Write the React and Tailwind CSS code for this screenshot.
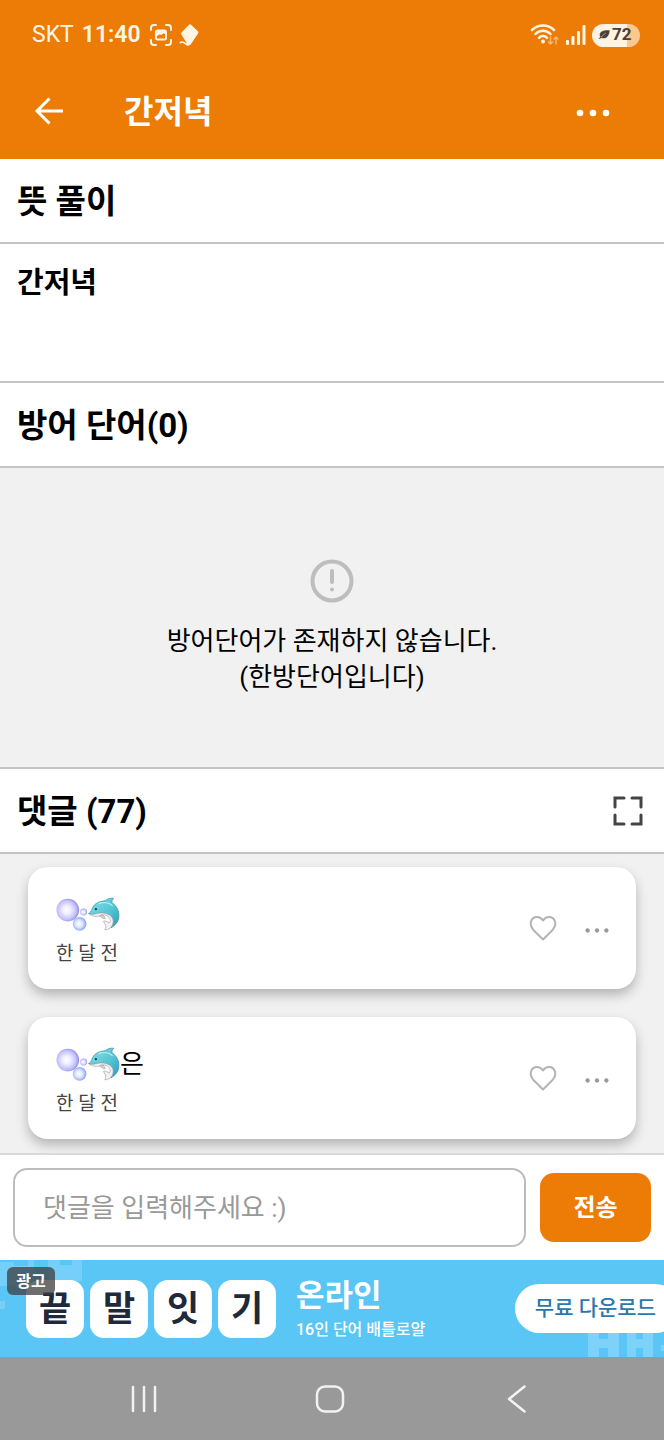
const Emojis = () => (
  <svg viewBox="0 0 65 36" className="h-9 w-16 shrink-0" role="img" aria-label="bubbles and dolphin">
    <defs>
      <radialGradient id="bubble" cx="0.45" cy="0.5" r="0.52">
        <stop offset="0" stopColor="#ffffff" />
        <stop offset="0.35" stopColor="#eeeeff" />
        <stop offset="0.8" stopColor="#c3c1fb" />
        <stop offset="1" stopColor="#9a94ea" />
      </radialGradient>
      <radialGradient id="bubbleBlue" cx="0.45" cy="0.5" r="0.52">
        <stop offset="0" stopColor="#ffffff" />
        <stop offset="0.5" stopColor="#dbe8ff" />
        <stop offset="1" stopColor="#8ea4ee" />
      </radialGradient>
      <linearGradient id="dolphin" x1="0" y1="0" x2="1" y2="1">
        <stop offset="0" stopColor="#8ae0e8" />
        <stop offset="0.55" stopColor="#55c6d4" />
        <stop offset="1" stopColor="#2b9db4" />
      </linearGradient>
    </defs>
    <circle cx="12" cy="14" r="11.5" fill="url(#bubble)" />
    <circle cx="28" cy="16" r="3.5" fill="url(#bubble)" />
    <circle cx="24" cy="28" r="7" fill="url(#bubbleBlue)" />
    <path
      d="M33 17.5c2-1 2.6-2 3.4-4C38 8 43 5 50 4.600c2-2 5-3 8.500-2.600-1.500 1.600-1.800 3-1.700 4.500C61.500 9.500 64.500 15 63.800 21c-.6 5-3.400 8.500-8 11 1-3 1.400-5 .9-7.500C55.500 18.500 49 16 42 17.600c-3 .7-6.500 1.300-9-.1z"
      fill="url(#dolphin)"
      stroke="#2b8fa5"
      strokeWidth="0.7"
    />
    <path
      d="M34 18.200c4 .5 6-.2 9-.9 7-1.600 14 1.500 15 7 .3 3-.6 5.500-3 8-1.500 1-3 1.600-5.500 1.700 1-1.700 1.300-3.300.8-5-.8-1.200-2-2.500-1.800-4 2 .2 4 .8 5.500 2.200 1.700-1.500 1.500-4-.3-6-1.500-1.600-4-2.500-7-2.300-3 2.300-9 2-12.700-.7z"
      fill="#f3f1f3"
      stroke="#a9a3aa"
      strokeWidth="0.7"
    />
    <path d="M44.500 19.500c1 2 3 3.200 5.500 3.300-.3-1.500-1-2.800-2.300-3.800z" fill="#d5d0d6" stroke="#8d888f" strokeWidth="0.5" />
    <path d="M43 7.500c5-2 11-1.300 14.500 2.200" fill="none" stroke="#b5f0f4" strokeWidth="1.200" />
    <circle cx="40.500" cy="13" r="1.200" fill="#173b4a" />
  </svg>
);

const Dots = ({ className, r = 2 }) => (
  <svg viewBox="0 0 36 12" className={className} fill="currentColor" aria-hidden="true">
    <circle cx="5" cy="6" r={r} />
    <circle cx="18" cy="6" r={r} />
    <circle cx="31" cy="6" r={r} />
  </svg>
);

const StatusBar = () => (
  <div className="flex h-[70px] items-center justify-between pl-8 pr-6 text-[#fff5e4]">
    <div className="flex items-center">
      <span className="text-[23px]">SKT</span>
      <span className="ml-2 text-[23px] font-semibold">11:40</span>
      <svg viewBox="0 0 24 24" className="ml-2 h-6 w-6" fill="none" stroke="currentColor" strokeWidth="2" strokeLinecap="round">
        <path d="M2 7V5a3 3 0 0 1 3-3h2M17 2h2a3 3 0 0 1 3 3v2M22 17v2a3 3 0 0 1-3 3h-2M7 22H5a3 3 0 0 1-3-3v-2" />
        <rect x="7" y="7.500" width="10" height="9" rx="1.500" />
        <path d="M8 8h8v3l-1.500-.8-2 1.800-2-.5L8 13z" fill="currentColor" stroke="none" />
      </svg>
      <svg viewBox="0 0 20 24" className="ml-1.5 h-6 w-5" fill="currentColor">
        <path d="M10 1.800q1-1 2 0l7 6.500q.9.900.2 1.900l-6.800 10.300q-1.300 2-3.100 2.200c-2.500.3-3.500-2-5.500-2.600-1.400-.4-2 .2-3 .4-.8-1.500.8-2.400 2.700-2.200 2.200.3 2.700 2 4.200 1.900L2.400 11.500q-.6-1 .2-2z" />
      </svg>
    </div>
    <div className="flex items-center">
      <svg viewBox="0 0 30 24" className="h-6 w-[30px]" fill="none" stroke="currentColor" strokeWidth="2.500" strokeLinecap="round">
        <path d="M2 7a15.500 15.500 0 0 1 22 0M5.500 11a10.500 10.500 0 0 1 15 0M9 14.800a5.500 5.500 0 0 1 8 0" />
        <circle cx="13" cy="18.500" r="2" fill="currentColor" stroke="none" />
        <path d="M20.500 14v7M18.500 19l2 2 2-2M26 21v-7M24 16l2-2 2 2" strokeWidth="1.500" opacity="0.500" />
      </svg>
      <svg viewBox="0 0 20 22" className="ml-1.5 h-[22px] w-5" fill="currentColor">
        <rect x="0" y="16" width="3" height="5" rx="1" />
        <rect x="5.500" y="12" width="3" height="9" rx="1" />
        <rect x="11" y="7" width="3" height="14" rx="1" />
        <rect x="16.500" y="1" width="3" height="20" rx="1" />
      </svg>
      <div className="ml-1.5 flex h-[23px] w-12 items-center gap-0.5 rounded-full bg-linear-to-r from-[#fff3e3] from-72% to-[#f9c88f] to-72% pl-1.5 text-[#494039]">
        <svg viewBox="0 0 12 10" className="h-2.5 w-3" fill="currentColor">
          <path d="M12 0C6-.2 1.500 1 1.500 5c0 1 .2 1.500.7 2L0 9h2l1.500-1c5 2 8-2 8.500-8zM3 7l5-4.200" stroke="#fff3e3" strokeWidth="0.500" />
        </svg>
        <span className="text-[17px] font-bold">72</span>
      </div>
    </div>
  </div>
);

const SectionTitle = ({ children, action }) => (
  <div className="flex h-[85px] items-center justify-between border-b-2 border-[#c4c4c4] bg-white pl-[17px] pr-5">
    <h2 className="pt-0.5 text-[33px] font-bold">{children}</h2>
    {action}
  </div>
);

const CommentCard = ({ text, time }) => (
  <li className="flex h-[122px] items-center rounded-[20px] bg-white pl-7 pr-[26px] shadow-[0_6px_12px_rgba(0,0,0,0.25)]">
    <div className="flex-1 pt-2">
      <p className="flex h-9 items-center text-[26px]">
        <Emojis />
        {text}
      </p>
      <p className="mt-2 text-[19px] leading-7 text-[#444]">{time}</p>
    </div>
    <button type="button" aria-label="좋아요" className="text-[#b3b3b3]">
      <svg viewBox="0 0 28 26" className="h-[26px] w-7" fill="none" stroke="currentColor" strokeWidth="2" strokeLinejoin="round">
        <path d="M14 24.500 4.200 14.700C-.5 9.500 2 2 8 2c2.600 0 4.600 1.300 6 3.500C15.400 3.300 17.400 2 20 2c6 0 8.500 7.500 3.800 12.700z" />
      </svg>
    </button>
    <button type="button" aria-label="더보기" className="ml-[27px] pt-1 text-[#999]">
      <Dots className="h-[9px] w-[26px]" r={3} />
    </button>
  </li>
);

const tiles = ["끝", "말", "잇", "기"];

const AdBanner = () => (
  <aside className="relative h-[97px] overflow-hidden bg-[#5ac6f6] text-white">
    <svg viewBox="0 0 84 50" className="absolute left-0 top-0 h-[50px] w-[84px]" fill="#76cff8" aria-hidden="true">
      <path d="M0 2h14v4h14V0h6v26H0zM48 0h12v5h12V0h10v21H48zM0 41h5v8H0z" />
    </svg>
    <svg viewBox="0 0 76 26" className="absolute bottom-0 right-0 h-[26px] w-[76px]" fill="#7dd2f9" aria-hidden="true">
      <path d="M0 0h11v8h9V0h11v26H20V17h-9v9H0zM39 0h9v8h7V0h10v26H55V17h-7v9h-9zM73 14h3v6h-3z" />
    </svg>
    <div className="relative flex h-full items-center pl-[26px]">
      <div className="flex gap-1.5">
        {tiles.map((tile) => (
          <span key={tile} className="flex h-[58px] w-[58px] items-center justify-center rounded-[14px] bg-white pt-1 text-[35px] font-bold text-[#1e293b]">
            {tile}
          </span>
        ))}
      </div>
      <div className="ml-5 flex-1 pt-0.5 whitespace-nowrap">
        <p className="text-[31px] leading-10 font-bold">온라인</p>
        <p className="text-base leading-7 font-medium">16인 단어 배틀로얄</p>
      </div>
      <a href="#download" className="-mr-4 flex h-[49px] items-center rounded-full bg-white pl-5 pr-6 text-[21px] font-medium whitespace-nowrap text-[#2c77ad]">
        무료 다운로드
      </a>
    </div>
    <span className="absolute left-[7px] top-[7px] flex h-7 w-12 items-center justify-center rounded-md bg-[#3d3d3d]/75 pt-0.5 text-base font-bold">광고</span>
  </aside>
);

const NavBar = () => (
  <nav className="flex h-[83px] items-center justify-around bg-[#999] pl-[51px] pr-[55px] text-[#f2f2f2]">
    <button type="button" aria-label="최근 앱">
      <svg viewBox="0 0 28 28" className="h-7 w-7" fill="none" stroke="currentColor" strokeWidth="2.500" strokeLinecap="round">
        <path d="M3 2v24M14 2v24M25 2v24" />
      </svg>
    </button>
    <button type="button" aria-label="홈">
      <svg viewBox="0 0 30 28" className="h-7 w-[30px]" fill="none" stroke="currentColor" strokeWidth="2.500">
        <rect x="2" y="1.500" width="26" height="25" rx="8" />
      </svg>
    </button>
    <button type="button" aria-label="뒤로">
      <svg viewBox="0 0 28 28" className="h-7 w-7" fill="none" stroke="currentColor" strokeWidth="2.500" strokeLinecap="round" strokeLinejoin="round">
        <path d="M22.500 1.500 7 14l15.500 12.500" />
      </svg>
    </button>
  </nav>
);

const comments = [
  { id: 1, text: "", time: "한 달 전" },
  { id: 2, text: "은", time: "한 달 전" },
];

const App = () => {
  return (
    <div className="flex min-h-screen flex-col bg-[#f1f1f1] font-[Roboto,'Noto_Sans_CJK_KR',sans-serif] text-black">
      <header className="bg-[#ec7c05] text-white">
        <StatusBar />
        <div className="flex h-[89px] items-center pb-2 pl-[34px] pr-[53px]">
          <button type="button" aria-label="뒤로 가기">
            <svg viewBox="0 0 30 28" className="h-7 w-[30px]" fill="none" stroke="currentColor" strokeWidth="3">
              <path d="M29 14H3M15.500 1.500 3 14l12.500 12.500" />
            </svg>
          </button>
          <h1 className="ml-[60px] flex-1 pt-0.5 text-[32px] font-bold">간저녁</h1>
          <button type="button" aria-label="메뉴" className="pt-1">
            <Dots className="h-3 w-9" r={3.3} />
          </button>
        </div>
      </header>

      <main>
        <section>
          <SectionTitle>뜻 풀이</SectionTitle>
          <p className="h-[139px] border-b-2 border-[#c4c4c4] bg-white px-[17px] pt-[18px] text-[29px] font-bold">간저녁</p>
        </section>

        <section>
          <SectionTitle>방어 단어(0)</SectionTitle>
          <div className="flex h-[301px] flex-col items-center justify-center border-b-2 border-[#c4c4c4] pt-[18px] text-center text-[26px] leading-9">
            <svg viewBox="0 0 44 44" className="mb-5 h-11 w-11" fill="none" stroke="#bdbdbd" strokeWidth="4">
              <circle cx="22" cy="22" r="19.500" />
              <path d="M22 12v11M22 30.500v.1" strokeLinecap="round" />
            </svg>
            <p>방어단어가 존재하지 않습니다.</p>
            <p>(한방단어입니다)</p>
          </div>
        </section>

        <section>
          <SectionTitle
            action={
              <button type="button" aria-label="전체 화면" className="text-[#444]">
                <svg viewBox="0 0 32 32" className="h-8 w-8" fill="none" stroke="currentColor" strokeWidth="3" strokeLinecap="round">
                  <path d="M3 12V3h9M20 3h9v9M29 20v9h-9M12 29H3v-9" />
                </svg>
              </button>
            }
          >
            댓글 (77)
          </SectionTitle>
          <ul className="flex flex-col gap-7 px-7 pt-[13px] pb-3.5">
            {comments.map((comment) => (
              <CommentCard key={comment.id} text={comment.text} time={comment.time} />
            ))}
          </ul>
        </section>
      </main>

      <form className="relative flex h-[107px] items-center gap-3.5 border-t-2 border-[#d9d9d9] bg-white px-[13px]" onSubmit={(e) => e.preventDefault()}>
        <input
          type="text"
          aria-label="댓글"
          placeholder="댓글을 입력해주세요 :)"
          className="h-[79px] min-w-0 flex-1 rounded-[14px] border-2 border-[#bdbdbd] px-7 text-[26px] placeholder:text-[#999]"
        />
        <button type="submit" className="h-[69px] w-[111px] rounded-[14px] bg-[#ec7c05] text-2xl font-bold text-white">
          전송
        </button>
      </form>

      <AdBanner />
      <NavBar />
    </div>
  );
};

export default App;
